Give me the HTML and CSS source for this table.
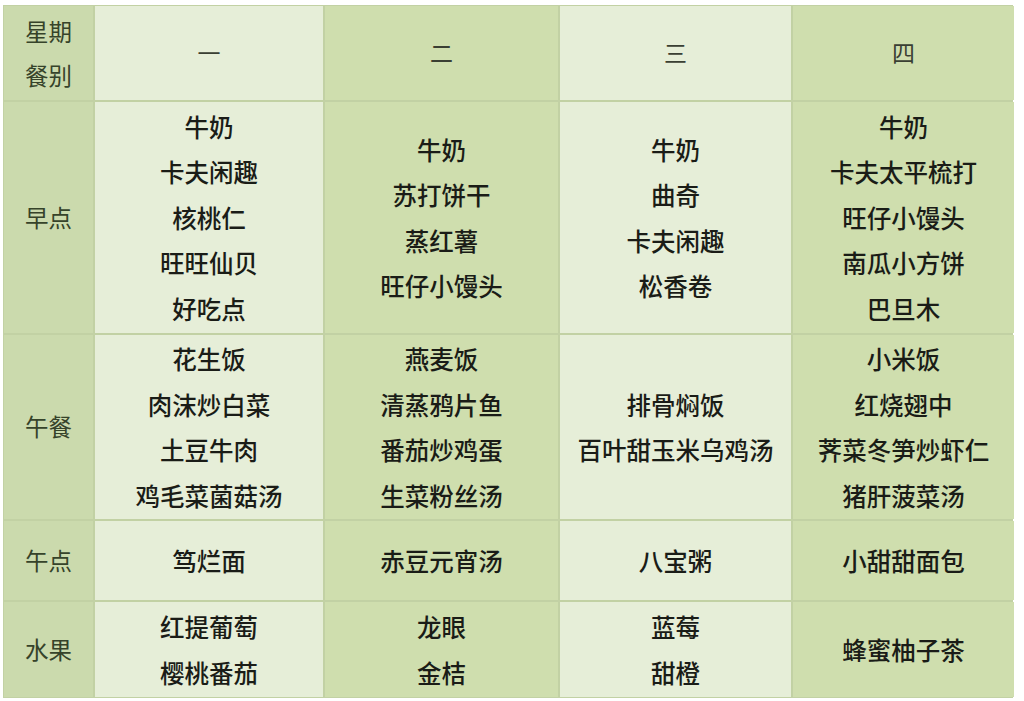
FILE: index.html
```html
<!DOCTYPE html>
<html lang="zh">
<head>
<meta charset="utf-8">
<link rel="stylesheet" href="styles.css">
</head>
<body>
<div class="menu">
  <div class="cell label head"><span>星期</span><span>餐别</span></div>
  <div class="cell light head-day">一</div>
  <div class="cell dark head-day">二</div>
  <div class="cell light head-day">三</div>
  <div class="cell dark head-day">四</div>

  <div class="cell label">早点</div>
  <div class="cell light"><span>牛奶</span><span>卡夫闲趣</span><span>核桃仁</span><span>旺旺仙贝</span><span>好吃点</span></div>
  <div class="cell dark"><span>牛奶</span><span>苏打饼干</span><span>蒸红薯</span><span>旺仔小馒头</span></div>
  <div class="cell light"><span>牛奶</span><span>曲奇</span><span>卡夫闲趣</span><span>松香卷</span></div>
  <div class="cell dark"><span>牛奶</span><span>卡夫太平梳打</span><span>旺仔小馒头</span><span>南瓜小方饼</span><span>巴旦木</span></div>

  <div class="cell label">午餐</div>
  <div class="cell light"><span>花生饭</span><span>肉沫炒白菜</span><span>土豆牛肉</span><span>鸡毛菜菌菇汤</span></div>
  <div class="cell dark"><span>燕麦饭</span><span>清蒸鸦片鱼</span><span>番茄炒鸡蛋</span><span>生菜粉丝汤</span></div>
  <div class="cell light"><span>排骨焖饭</span><span>百叶甜玉米乌鸡汤</span></div>
  <div class="cell dark"><span>小米饭</span><span>红烧翅中</span><span>荠菜冬笋炒虾仁</span><span>猪肝菠菜汤</span></div>

  <div class="cell label">午点</div>
  <div class="cell light"><span>笃烂面</span></div>
  <div class="cell dark"><span>赤豆元宵汤</span></div>
  <div class="cell light"><span>八宝粥</span></div>
  <div class="cell dark"><span>小甜甜面包</span></div>

  <div class="cell label">水果</div>
  <div class="cell light"><span>红提葡萄</span><span>樱桃番茄</span></div>
  <div class="cell dark"><span>龙眼</span><span>金桔</span></div>
  <div class="cell light"><span>蓝莓</span><span>甜橙</span></div>
  <div class="cell dark"><span>蜂蜜柚子茶</span></div>
</div>
</body>
</html>
```

FILE: styles.css
```css
html, body {
  margin: 0;
  padding: 0;
  background: #ffffff;
}

body {
  padding: 5px 0 0 3px;
  font-family: "Noto Sans CJK SC", "Noto Sans", sans-serif;
}

.menu {
  display: grid;
  grid-template-columns: 89px 228px 233px 231px 221px;
  grid-template-rows: 94px 231px 184px 79px 95px;
  gap: 2px;
  background: #c2d1a4;
  width: 1010px;
  border: 1px solid #c2d1a4;
  box-sizing: border-box;
}

.cell {
  display: flex;
  flex-direction: column;
  align-items: center;
  justify-content: center;
  font-size: 24.5px;
  font-weight: 500;
  line-height: 45.5px;
  color: #1a1c17;
  padding-top: 0;
  box-sizing: border-box;
}

.light {
  background: #e6eed8;
}

.dark {
  background: #cfdeae;
}

.label {
  background: #cbdaad;
  color: #36432a;
  font-size: 23.5px;
  font-weight: 400;
}

.head {
  line-height: 44px;
}

.head-day {
  color: #3a3f33;
  font-size: 23px;
  font-weight: 400;
}
```
